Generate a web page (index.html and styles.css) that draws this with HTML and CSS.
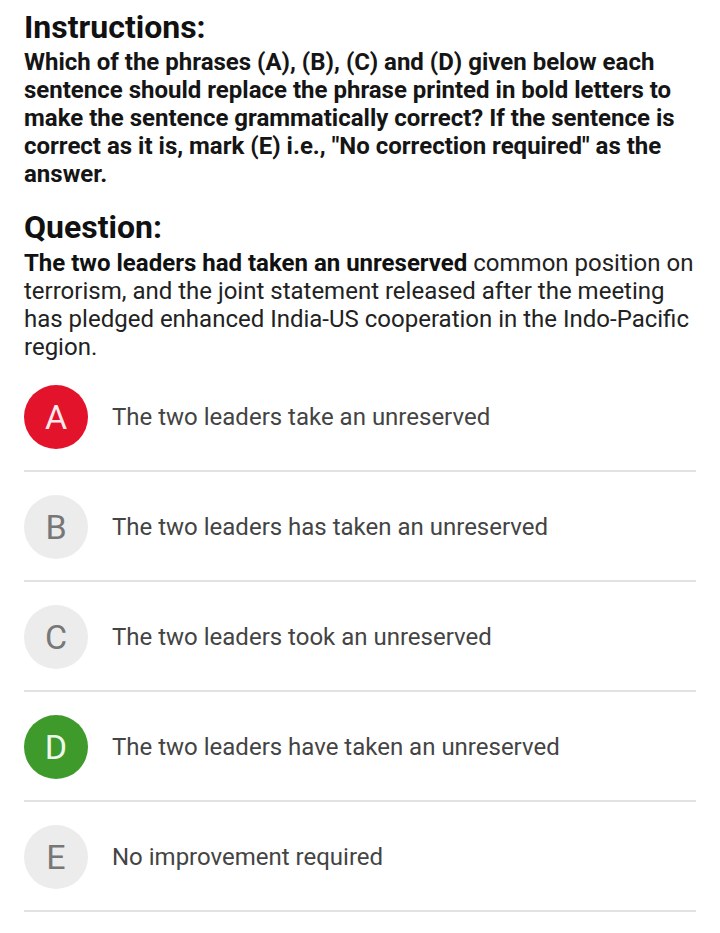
FILE: index.html
```html
<!DOCTYPE html>
<html lang="en">
<head>
<meta charset="utf-8">
<title>Question</title>
<link rel="stylesheet" href="styles.css">
</head>
<body>
<main class="page">
  <section class="block">
    <h2 class="heading">Instructions:</h2>
    <p class="instructions">Which of the phrases (A), (B), (C) and (D) given below each sentence should replace the phrase printed in bold letters to make the sentence grammatically correct? If the sentence is correct as it is, mark (E) i.e., "No correction required" as the answer.</p>
  </section>
  <section class="block">
    <h2 class="heading">Question:</h2>
    <p class="question"><strong>The two leaders had taken an unreserved</strong> common position on terrorism, and the joint statement released after the meeting has pledged enhanced India-US cooperation in the Indo-Pacific region.</p>
  </section>
  <ul class="options">
    <li class="option"><span class="badge badge-wrong">A</span><span class="option-text">The two leaders take an unreserved</span></li>
    <li class="option"><span class="badge">B</span><span class="option-text">The two leaders has taken an unreserved</span></li>
    <li class="option"><span class="badge">C</span><span class="option-text">The two leaders took an unreserved</span></li>
    <li class="option"><span class="badge badge-right">D</span><span class="option-text">The two leaders have taken an unreserved</span></li>
    <li class="option"><span class="badge">E</span><span class="option-text">No improvement required</span></li>
  </ul>
</main>
</body>
</html>
```

FILE: styles.css
```css
* { box-sizing: border-box; }
html, body { margin: 0; padding: 0; background: #ffffff; }
body {
  font-family: Roboto, "Noto Sans", Arial, sans-serif;
  color: #111;
}
.page {
  padding: 9px 24px 0 24px;
}
.block { margin: 0; }
.heading {
  margin: 0;
  font-size: 32px;
  line-height: 36px;
  font-weight: 700;
  color: #111;
}
.instructions {
  margin: 3px 0 21px 0;
  font-size: 24px;
  line-height: 28px;
  font-weight: 700;
  color: #151515;
}
.question {
  margin: 4px 0 0 0;
  font-size: 24px;
  line-height: 28px;
  color: #222;
}
.question strong { font-weight: 700; color: #111; }
.options {
  list-style: none;
  margin: 1px 0 0 0;
  padding: 0;
}
.option {
  display: flex;
  align-items: center;
  gap: 24px;
  padding: 23px 0 21px 0;
  border-bottom: 2px solid #e2e2e2;
}
.badge {
  flex: none;
  width: 64px;
  height: 64px;
  border-radius: 50%;
  background: #ececec;
  color: #777;
  display: flex;
  align-items: center;
  justify-content: center;
  font-size: 34px;
  font-weight: 400;
}
.badge-wrong { background: #e3132b; color: #fde9ec; }
.badge-right { background: #3e9a2b; color: #eef8ea; }
.option-text {
  font-size: 24px;
  color: #444;
}
```
